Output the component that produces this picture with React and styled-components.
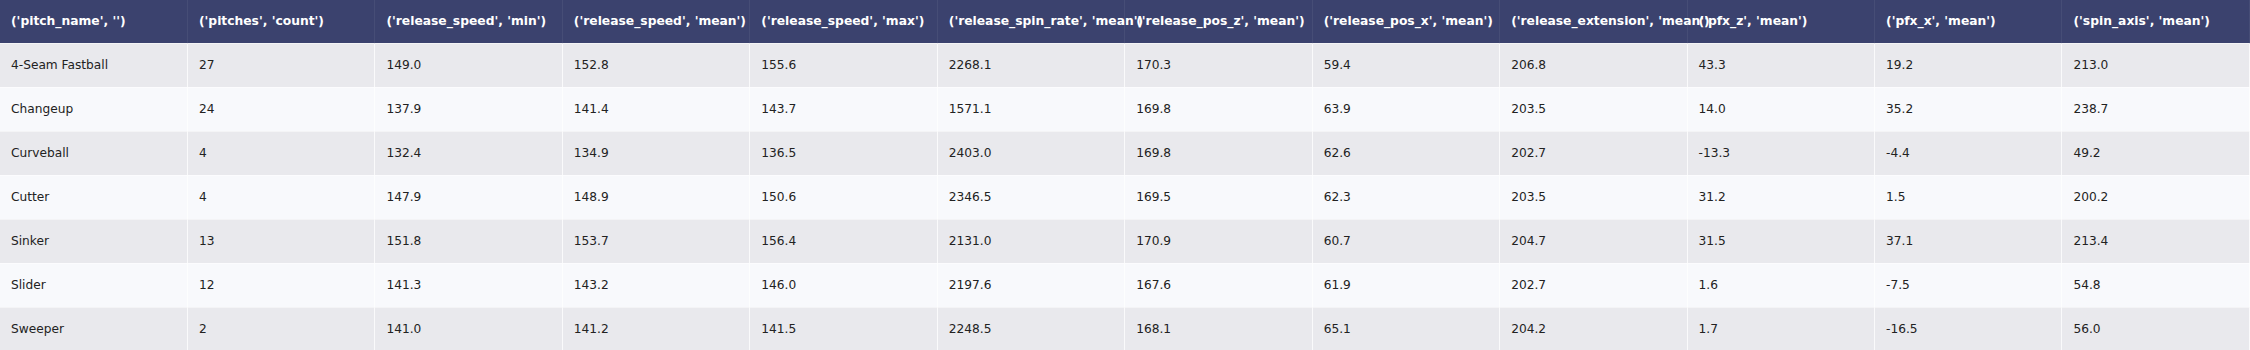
import React from "react";
import styled, { createGlobalStyle } from "styled-components";

const Global = createGlobalStyle`
  html, body { margin: 0; padding: 0; background: #ffffff; }
  body { font-family: "DejaVu Sans", Verdana, sans-serif; overflow: hidden; }
`;

const Wrap = styled.div`
  width: 2250px;
  height: 350px;
  overflow: hidden;
`;

const Table = styled.table`
  width: 2250px;
  table-layout: fixed;
  border-collapse: collapse;
  font-family: "DejaVu Sans", Verdana, sans-serif;
  font-size: 12.2px;
`;

const HeadCell = styled.th`
  height: 43px;
  padding: 0 11px;
  box-sizing: border-box;
  background: #3b426e;
  color: #ffffff;
  font-weight: bold;
  font-size: 12.3px;
  text-align: left;
  white-space: nowrap;
  vertical-align: middle;
  border-right: 1px solid rgba(255, 255, 255, 0.06);
`;

const Row = styled.tr`
  background: ${(p) => (p.$odd ? "#e9e9ed" : "#f8f9fc")};
`;

const Cell = styled.td`
  height: 44px;
  padding: 0 11px;
  box-sizing: border-box;
  color: #222222;
  white-space: nowrap;
  vertical-align: middle;
  border-right: 1px solid rgba(255, 255, 255, 0.75);
  border-top: 1px solid rgba(255, 255, 255, 0.5);
`;

const headers = [
  "('pitch_name', '')",
  "('pitches', 'count')",
  "('release_speed', 'min')",
  "('release_speed', 'mean')",
  "('release_speed', 'max')",
  "('release_spin_rate', 'mean')",
  "('release_pos_z', 'mean')",
  "('release_pos_x', 'mean')",
  "('release_extension', 'mean')",
  "('pfx_z', 'mean')",
  "('pfx_x', 'mean')",
  "('spin_axis', 'mean')",
];

const rows = [
  ["4-Seam Fastball", "27", "149.0", "152.8", "155.6", "2268.1", "170.3", "59.4", "206.8", "43.3", "19.2", "213.0"],
  ["Changeup", "24", "137.9", "141.4", "143.7", "1571.1", "169.8", "63.9", "203.5", "14.0", "35.2", "238.7"],
  ["Curveball", "4", "132.4", "134.9", "136.5", "2403.0", "169.8", "62.6", "202.7", "-13.3", "-4.4", "49.2"],
  ["Cutter", "4", "147.9", "148.9", "150.6", "2346.5", "169.5", "62.3", "203.5", "31.2", "1.5", "200.2"],
  ["Sinker", "13", "151.8", "153.7", "156.4", "2131.0", "170.9", "60.7", "204.7", "31.5", "37.1", "213.4"],
  ["Slider", "12", "141.3", "143.2", "146.0", "2197.6", "167.6", "61.9", "202.7", "1.6", "-7.5", "54.8"],
  ["Sweeper", "2", "141.0", "141.2", "141.5", "2248.5", "168.1", "65.1", "204.2", "1.7", "-16.5", "56.0"],
];

export default function App() {
  return (
    <Wrap>
      <Global />
      <Table>
        <thead>
          <tr>
            {headers.map((h) => (
              <HeadCell key={h}>{h}</HeadCell>
            ))}
          </tr>
        </thead>
        <tbody>
          {rows.map((r, i) => (
            <Row key={r[0]} $odd={i % 2 === 0}>
              {r.map((v, j) => (
                <Cell key={j}>{v}</Cell>
              ))}
            </Row>
          ))}
        </tbody>
      </Table>
    </Wrap>
  );
}
